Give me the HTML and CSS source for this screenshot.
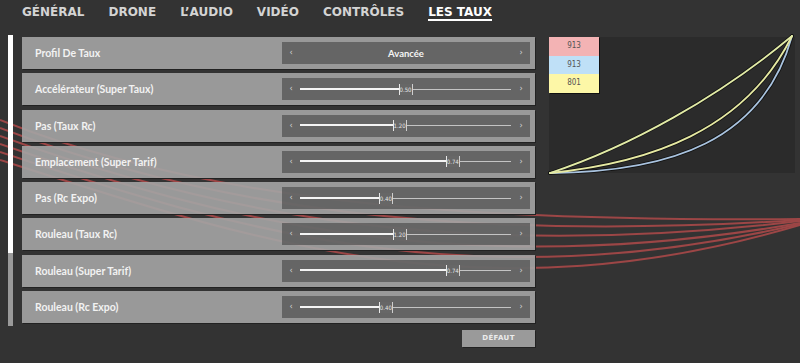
FILE: index.html
```html
<!DOCTYPE html>
<html lang="fr">
<head>
<meta charset="utf-8">
<title>Les Taux</title>
<link rel="stylesheet" href="styles.css">
</head>
<body>
<svg class="bg-lines" viewBox="0 0 800 363" width="800" height="363">
  <g fill="none" stroke="#9c4646" stroke-width="2">
    <path d="M0 120 C200 200 450 222 800 219"/>
    <path d="M0 128 C210 208 456 242 800 220"/>
    <path d="M0 136 C220 216 462 261 800 221"/>
    <path d="M0 144 C230 224 468 281 800 223"/>
    <path d="M0 152 C240 232 474 300 800 224"/>
    <path d="M0 160 C250 240 480 320 800 225"/>
  </g>
</svg>

<nav class="tabs">
  <span class="tab">GÉNÉRAL</span>
  <span class="tab">DRONE</span>
  <span class="tab">L’AUDIO</span>
  <span class="tab">VIDÉO</span>
  <span class="tab">CONTRÔLES</span>
  <span class="tab active">LES TAUX</span>
</nav>

<div class="main">
  <div class="scroll"><div class="scroll-thumb"></div></div>

  <div class="settings">
    <div class="row">
      <span class="label">Profil De Taux</span>
      <div class="control">
        <span class="arrow">‹</span>
        <span class="select-value">Avancée</span>
        <span class="arrow">›</span>
      </div>
    </div>
    <div class="row">
      <span class="label">Accélérateur (Super Taux)</span>
      <div class="control">
        <span class="arrow">‹</span>
        <div class="track" style="--v:0.50"><div class="fill"></div><div class="thumb">0.50</div></div>
        <span class="arrow">›</span>
      </div>
    </div>
    <div class="row">
      <span class="label">Pas (Taux Rc)</span>
      <div class="control">
        <span class="arrow">‹</span>
        <div class="track" style="--v:0.47"><div class="fill"></div><div class="thumb">1.20</div></div>
        <span class="arrow">›</span>
      </div>
    </div>
    <div class="row">
      <span class="label">Emplacement (Super Tarif)</span>
      <div class="control">
        <span class="arrow">‹</span>
        <div class="track" style="--v:0.74"><div class="fill"></div><div class="thumb">0.74</div></div>
        <span class="arrow">›</span>
      </div>
    </div>
    <div class="row">
      <span class="label">Pas (Rc Expo)</span>
      <div class="control">
        <span class="arrow">‹</span>
        <div class="track" style="--v:0.40"><div class="fill"></div><div class="thumb">0.40</div></div>
        <span class="arrow">›</span>
      </div>
    </div>
    <div class="row">
      <span class="label">Rouleau (Taux Rc)</span>
      <div class="control">
        <span class="arrow">‹</span>
        <div class="track" style="--v:0.47"><div class="fill"></div><div class="thumb">1.20</div></div>
        <span class="arrow">›</span>
      </div>
    </div>
    <div class="row">
      <span class="label">Rouleau (Super Tarif)</span>
      <div class="control">
        <span class="arrow">‹</span>
        <div class="track" style="--v:0.74"><div class="fill"></div><div class="thumb">0.74</div></div>
        <span class="arrow">›</span>
      </div>
    </div>
    <div class="row">
      <span class="label">Rouleau (Rc Expo)</span>
      <div class="control">
        <span class="arrow">‹</span>
        <div class="track" style="--v:0.40"><div class="fill"></div><div class="thumb">0.40</div></div>
        <span class="arrow">›</span>
      </div>
    </div>
    <div class="actions">
      <button class="btn">DÉFAUT</button>
    </div>
  </div>

  <div class="graph">
    <svg class="curves" viewBox="0 0 246 136" width="246" height="136">
      <g fill="none" stroke="#111" stroke-width="3.4" stroke-linecap="round">
        <path d="M1 136 C122 135 214 104 243 -1"/>
        <path d="M1 136 C100 126 196 94 243 -1"/>
        <path d="M1 136 C80 110 170 60 243 -1"/>
      </g>
      <g fill="none" stroke-width="1.8" stroke-linecap="round">
        <path d="M1 136 C122 135 214 104 243 -1" stroke="#a9c3df"/>
        <path d="M1 136 C100 126 196 94 243 -1" stroke="#e6e9a2"/>
        <path d="M1 136 C80 110 170 60 243 -1" stroke="#e2eba6"/>
      </g>
    </svg>
    <div class="legend">
      <div class="legend-item pink">913</div>
      <div class="legend-item blue">913</div>
      <div class="legend-item yellow">801</div>
    </div>
  </div>
</div>
</body>
</html>
```

FILE: styles.css
```css
* {
  box-sizing: border-box;
  margin: 0;
  padding: 0;
}

body {
  width: 800px;
  height: 363px;
  overflow: hidden;
  background: #333333;
  font-family: Lato, "DejaVu Sans", sans-serif;
  position: relative;
}

.bg-lines {
  position: absolute;
  left: 0;
  top: 0;
}

.tabs {
  position: relative;
  display: flex;
  gap: 24px;
  height: 35px;
  padding: 5px 0 0 22px;
}

.tab {
  font-family: "DejaVu Sans", sans-serif;
  font-weight: 700;
  font-size: 12px;
  line-height: 14px;
  height: 16px;
  color: #d4d4d4;
}

.tab.active {
  color: #ffffff;
  border-bottom: 2px solid #ffffff;
}

.main {
  position: relative;
  display: flex;
  align-items: flex-start;
}

.scroll {
  width: 5px;
  height: 291px;
  margin-left: 8px;
  background: #9a9a9a;
}

.scroll-thumb {
  width: 5px;
  height: 218px;
  background: #ffffff;
}

.settings {
  width: 513px;
  margin-left: 9px;
  padding-top: 2px;
  display: flex;
  flex-direction: column;
  gap: 4.3px;
}

.row {
  height: 32px;
  display: flex;
  align-items: center;
  justify-content: space-between;
  background: rgba(164, 164, 164, 0.91);
  box-shadow: 1px 1px 0 #222222;
}

.label {
  padding-left: 13px;
  font-weight: 700;
  font-size: 10.5px;
  color: #f2f2f2;
}

.control {
  width: 248px;
  height: 22px;
  margin-right: 5px;
  display: flex;
  align-items: center;
  padding: 0 6px;
  background: rgba(74, 74, 74, 0.65);
}

.arrow {
  width: 6px;
  font-family: "DejaVu Sans", sans-serif;
  font-size: 8px;
  line-height: 8px;
  color: #d8d8d8;
  text-align: center;
}

.select-value {
  flex: 1;
  text-align: center;
  font-weight: 700;
  font-size: 9.5px;
  color: #f4f4f4;
}

.track {
  position: relative;
  flex: 1;
  height: 1px;
  margin: 0 7px 0 6px;
  background: #c4c4c4;
}

.fill {
  position: absolute;
  left: 0;
  top: -1px;
  height: 2px;
  width: calc((100% - 14px) * var(--v));
  background: #f4f4f4;
}

.thumb {
  position: absolute;
  top: -5px;
  left: calc((100% - 14px) * var(--v));
  width: 14px;
  height: 11px;
  border-left: 1.5px solid #e8e8e8;
  border-right: 1px solid #cfcfcf;
  font-family: "DejaVu Sans Condensed", "DejaVu Sans", sans-serif;
  font-size: 6px;
  line-height: 11px;
  text-align: center;
  color: #e6e6e6;
  background: #676767;
}

.actions {
  display: flex;
  justify-content: flex-end;
  padding-top: 2.5px;
}

.btn {
  width: 73px;
  height: 17px;
  border: none;
  background: #9a9a9a;
  box-shadow: 1px 1px 0 #222222;
  color: #ececec;
  font-family: "DejaVu Sans", sans-serif;
  font-weight: 700;
  font-size: 7px;
  letter-spacing: 0.4px;
}

.graph {
  position: relative;
  width: 246px;
  height: 136px;
  margin-left: 14px;
  margin-top: 2px;
  background: #2b2b2b;
}

.curves {
  position: absolute;
  left: 0;
  top: 0;
  overflow: visible;
}

.legend {
  position: relative;
  width: 50px;
  box-shadow: 1px 1px 0 #111111;
}

.legend-item {
  height: 18.7px;
  line-height: 18.7px;
  text-align: center;
  font-family: "DejaVu Sans Condensed", "DejaVu Sans", sans-serif;
  font-size: 8px;
  color: #555555;
}

.pink { background: #f3b3b4; }
.blue { background: #bfe0f7; }
.yellow { background: #fdf7a7; }
```
